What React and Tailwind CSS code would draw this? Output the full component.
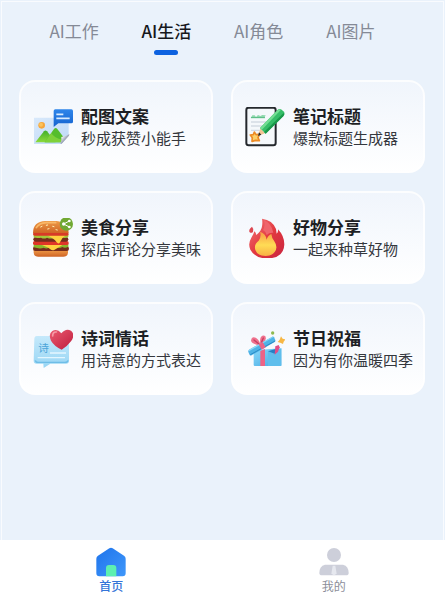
import React, { useState } from "react";

const PhotoIcon = () => (
  <svg viewBox="15 20 120 120" className="w-10 h-10 shrink-0" aria-hidden="true">
    <defs>
      <linearGradient id="sky" x1="0" y1="0" x2="1" y2="1">
        <stop offset="0" stopColor="#d9e9fb" />
        <stop offset="1" stopColor="#bdd9f8" />
      </linearGradient>
      <linearGradient id="hill" x1="0" y1="0" x2="0" y2="1">
        <stop offset="0" stopColor="#3fae2a" />
        <stop offset="1" stopColor="#8edb3c" />
      </linearGradient>
      <linearGradient id="bubble" x1="0" y1="0" x2="0" y2="1">
        <stop offset="0" stopColor="#2f86ea" />
        <stop offset="1" stopColor="#1462cf" />
      </linearGradient>
      <linearGradient id="fold" x1="0" y1="0" x2="1" y2="1">
        <stop offset="0.2" stopColor="#ffffff" />
        <stop offset="0.6" stopColor="#8a93aa" />
      </linearGradient>
    </defs>
    <path d="M18 52h104v52l-22 27H18z" fill="url(#sky)" />
    <circle cx="41" cy="75" r="10" fill="#f6a63a" />
    <circle cx="39" cy="73" r="6" fill="#fbc35d" />
    <path d="M22 126l26-33q4-5 9 0l26 33z" fill="url(#hill)" />
    <path d="M50 126l28-40q5-6 10 0l21 28-8 12z" fill="#55bd2d" />
    <path d="M50 126l20-28q8 16 34 20l-5 8z" fill="#7ed13a" />
    <path d="M97 130q5-10 3-20 13-1 24-9l-1 5-22 24z" fill="url(#fold)" />
    <path d="M82 27h48q5 0 5 5v32q0 5-5 5H91L77 80V32q0-5 5-5z" fill="url(#bubble)" />
    <path d="M85 42h21M85 54h40" stroke="#d9ecff" strokeWidth="5" />
  </svg>
);

const NoteIcon = () => (
  <svg viewBox="15 20 120 120" className="w-10 h-10 shrink-0" aria-hidden="true">
    <rect x="19" y="22" width="88" height="113" rx="7" fill="#f5f8fb" stroke="#25282d" strokeWidth="6" />
    <path d="M32 53l5-8h7l4 5 6-6 7 3 6-3 10 1-4 7z" fill="#8fd8ad" />
    <path d="M33 52h42" stroke="#55b981" strokeWidth="3" />
    <path d="M33 65h45M33 77h38M33 90h26" stroke="#d3dae4" strokeWidth="4" />
    <path d="M43 95l5 8 11-1-5 10 4 9-11-1-11 3 1-11-6-8 9-1z" fill="#fbd06a" stroke="#ed8b25" strokeWidth="5" strokeLinejoin="round" />
    <path d="M54 107l7-23 14 15z" fill="#f2c493" />
    <path d="M54 107l3-11 7 7z" fill="#25282d" />
    <path d="M60 83l50-52q6-7 13-4l9 7q4 7-2 13L77 100z" fill="#35bd68" />
    <path d="M60 83l53-54q5-4 10-1L65 89z" fill="#72dd92" />
    <path d="M72 95l59-57q4 4-1 10L77 100z" fill="#189849" />
  </svg>
);

const BurgerIcon = () => (
  <svg viewBox="15 23 120 120" className="w-10 h-10 shrink-0" aria-hidden="true">
    <defs>
      <linearGradient id="bun" x1="0" y1="0" x2="0" y2="1">
        <stop offset="0" stopColor="#ee9a47" />
        <stop offset="1" stopColor="#cf6425" />
      </linearGradient>
    </defs>
    <path d="M17 119h103v8q-1 12-14 12H31q-13 0-14-12z" fill="url(#bun)" />
    <rect x="15" y="108" width="108" height="14" rx="7" fill="#762d1c" />
    <path d="M17 101h104v8q-10 6-18 1-9 6-18 1-10 6-20 0-9 6-18 1-10 5-30-1z" fill="#8ab82c" />
    <path d="M30 101h78l-28 17q-7 4-13-1-7-8-37-16z" fill="#ffd13f" />
    <rect x="15" y="92" width="107" height="12" rx="5" fill="#df3628" />
    <rect x="16" y="80" width="105" height="14" rx="7" fill="#762d1c" />
    <path d="M17 72h104v8q-10 6-20 1-9 6-20 1-12 5-24 0-9 5-18 0-12 3-22-1z" fill="#a4c83a" />
    <path d="M56 75h57l-10 9-8 13q-4 5-9-1-8-12-30-21z" fill="#ffd13f" />
    <rect x="15" y="66" width="107" height="10" rx="5" fill="#d83a27" />
    <path d="M15 68q0-34 37-36h34q35 3 36 36z" fill="url(#bun)" />
    <path d="M25 52q9-14 30-15h28" fill="none" stroke="#f9b868" strokeWidth="5" strokeLinecap="round" />
    <path d="M38 50l4-2M55 45l4-1M74 48l4 1M59 56l4-1M84 58l4 1" stroke="#fff0b5" strokeWidth="3" strokeLinecap="round" />
    <circle cx="115" cy="41" r="20" fill="#70a832" />
    <path d="M124 32l-17 9 17 9" fill="none" stroke="#fff" strokeWidth="3" />
    <circle cx="124" cy="32" r="4" fill="#fff" />
    <circle cx="107" cy="41" r="5" fill="#fff" />
    <circle cx="124" cy="50" r="4" fill="#fff" />
  </svg>
);

const FireIcon = () => (
  <svg viewBox="15 23 120 120" className="w-10 h-10 shrink-0" aria-hidden="true">
    <defs>
      <linearGradient id="flame" x1="0" y1="0" x2="1" y2="1">
        <stop offset="0" stopColor="#f37a7c" />
        <stop offset="0.5" stopColor="#e2383f" />
        <stop offset="1" stopColor="#c92540" />
      </linearGradient>
      <linearGradient id="core" x1="0" y1="0" x2="0" y2="1">
        <stop offset="0" stopColor="#f79a45" />
        <stop offset="0.55" stopColor="#ffdc55" />
        <stop offset="1" stopColor="#f8b044" />
      </linearGradient>
    </defs>
    <path d="M66 25q32 4 42 31l2 14q5-5 4-13 19 20 19 45-1 38-44 42-42 3-58-26-8-18 3-36 7-10 9-19 5 4 6 11 16-13 17-26 2-12 0-23z" fill="url(#flame)" />
    <path d="M71 29q23 8 29 38-13-1-20 7-2-10-11-15 8-14 2-30z" fill="#ef656c" />
    <path d="M60 64q18 6 20 24 3-12 14-17 1 12 9 22 12 18 1 32-9 12-27 12-24 0-31-18-5-17 10-28 9-12 4-27z" fill="url(#core)" />
    <path d="M36 49q6 6 3 15-4 6-10 2-5-7 7-17z" fill="#dd4650" />
  </svg>
);

const PoemIcon = () => (
  <svg viewBox="15 20 120 120" className="w-10 h-10 shrink-0" aria-hidden="true">
    <defs>
      <linearGradient id="card" x1="0" y1="0" x2="0" y2="1">
        <stop offset="0" stopColor="#c5e9fb" />
        <stop offset="1" stopColor="#97d5f4" />
      </linearGradient>
      <linearGradient id="heart" x1="0" y1="0" x2="1" y2="1">
        <stop offset="0" stopColor="#ec5b70" />
        <stop offset="1" stopColor="#bd1c3d" />
      </linearGradient>
    </defs>
    <path d="M27 41h87q9 0 9 9v65q0 9-9 9H67l-20 13-1-13H26q-9 0-9-9l2-65q0-9 8-9z" fill="url(#card)" />
    <path d="M22 114q1 6 8 6h81q8 0 9-6" fill="none" stroke="#6ebde7" strokeWidth="4" />
    <path d="M66 92h48M29 106h82" stroke="#e3f6ff" strokeWidth="4" />
    <text x="31" y="88" fontSize="32" fill="#4ba4d8">诗</text>
    <path d="M100 33q14-17 29-8 14 12 0 32-11 15-28 25-23-11-32-27-9-20 4-29 15-8 27 7z" fill="url(#heart)" />
    <path d="M74 41q0-13 11-12" fill="none" stroke="#f69aa6" strokeWidth="5" strokeLinecap="round" />
  </svg>
);

const GiftIcon = () => (
  <svg viewBox="15 20 120 120" className="w-10 h-10 shrink-0" aria-hidden="true">
    <defs>
      <linearGradient id="box" x1="0" y1="0" x2="1" y2="1">
        <stop offset="0" stopColor="#8bd9fa" />
        <stop offset="1" stopColor="#43a8e2" />
      </linearGradient>
    </defs>
    <path d="M41 84l83-6v50q0 3-4 3H44q-3 0-3-4z" fill="url(#box)" />
    <path d="M84 87l20 7 20-16v53H84z" fill="#5fbeec" />
    <path d="M84 87l25-8-5 15z" fill="#267fc4" />
    <path d="M61 86l14-6v51H61z" fill="#ed6386" />
    <path d="M59 69q-23-4-26-14 2-14 14-9 9 4 14 19-3-21 6-25 13-2 10 11-4 12-15 18z" fill="#ef718d" />
    <path d="M42 53l14 11M70 47l-6 14" stroke="#c63d61" strokeWidth="4" strokeLinecap="round" />
    <path d="M27 82l70-39q3-1 5 2l4 8q1 4-2 6L35 99q-4 2-6-1l-4-9q-1-4 2-7z" fill="#4fb3e6" />
    <path d="M27 82l70-39q3-1 4 1L27 87z" fill="#8bd9f8" />
    <path d="M31 97l74-41" stroke="#2a8bc6" strokeWidth="3" />
    <path d="M56 66l12-7 9 16-12 7z" fill="#ed6386" />
    <path d="M106 72l10-4 3 7-5 13-10 9z" fill="#e14e86" />
    <path d="M123 42l5 7 9 2-6 7-2 7-8-4-8-2 6-7z" fill="#f7b744" />
    <circle cx="98" cy="32" r="5" fill="#8eb950" />
  </svg>
);

const HomeIcon = () => (
  <svg viewBox="0 0 90 90" className="w-[30px] h-[30px]" aria-hidden="true">
    <defs>
      <linearGradient id="house" x1="0" y1="0" x2="1" y2="1">
        <stop offset="0" stopColor="#1f74ec" />
        <stop offset="1" stopColor="#3f97fa" />
      </linearGradient>
    </defs>
    <path d="M40 4q5-4 10 0l34 22q5 3 5 9v44q0 9-9 9H10q-9 0-9-9V35q0-6 5-9z" fill="url(#house)" />
    <path d="M30 88V63q0-9 9-9h13q9 0 9 9v25z" fill="#5df0b0" />
  </svg>
);

const UserIcon = () => (
  <svg viewBox="0 0 90 90" className="w-[30px] h-[30px]" aria-hidden="true">
    <circle cx="45" cy="24" r="21" fill="#cdcfda" />
    <path d="M18 53h54q17 4 17 25 0 7-8 7H9q-8 0-8-7 0-21 17-25z" fill="#cdcfda" />
    <path d="M41 56h8l4 24-8 5-8-5z" fill="#e6e8ef" />
  </svg>
);

const tabs = ["AI工作", "AI生活", "AI角色", "AI图片"];

const cards = [
  { title: "配图文案", desc: "秒成获赞小能手", Icon: PhotoIcon },
  { title: "笔记标题", desc: "爆款标题生成器", Icon: NoteIcon },
  { title: "美食分享", desc: "探店评论分享美味", Icon: BurgerIcon },
  { title: "好物分享", desc: "一起来种草好物", Icon: FireIcon },
  { title: "诗词情话", desc: "用诗意的方式表达", Icon: PoemIcon },
  { title: "节日祝福", desc: "因为有你温暖四季", Icon: GiftIcon },
];

const App = () => {
  const [tab, setTab] = useState("AI生活");

  return (
    <div className="min-h-screen flex flex-col bg-[#eaf2fb] outline outline-white/70 -outline-offset-2 font-['Noto_Sans_CJK_SC',sans-serif]">
      <div className="flex pl-7 pr-12 pt-5">
        {tabs.map((name) => (
          <button
            key={name}
            onClick={() => setTab(name)}
            className="flex-1 flex flex-col items-center gap-2 cursor-pointer whitespace-nowrap"
          >
            <span
              className={
                tab === name
                  ? "text-[17px] leading-[22px] font-medium text-[#15171c]"
                  : "text-[17px] leading-[22px] text-[#858a96]"
              }
            >
              {name}
            </span>
            {tab === name && (
              <span className="w-6 h-[5px] rounded-full bg-[#0d62e0]" />
            )}
          </button>
        ))}
      </div>

      <main className="grid grid-cols-2 gap-[18px] pl-[19px] pr-5 pt-[25px] pb-6">
        {cards.map(({ title, desc, Icon }) => (
          <a
            key={title}
            href="#"
            className="flex items-center gap-2 py-[22px] pl-3 rounded-2xl border-2 border-white/80 bg-linear-to-b from-[#f0f5fc] to-white bg-origin-border whitespace-nowrap"
          >
            <Icon />
            <div>
              <h2 className="text-[17px] leading-[23px] font-bold text-[#1d1f24]">
                {title}
              </h2>
              <p className="text-[15px] leading-[22px] text-[#34373d]">{desc}</p>
            </div>
          </a>
        ))}
      </main>

      <nav className="mt-auto flex bg-white pt-[7px] pb-1.5">
        <a href="#" className="flex-1 flex flex-col items-center">
          <HomeIcon />
          <span className="text-xs leading-[17px] font-medium text-[#3474d8]">首页</span>
        </a>
        <a href="#" className="flex-1 flex flex-col items-center">
          <UserIcon />
          <span className="text-xs leading-[17px] text-[#8b8e99]">我的</span>
        </a>
      </nav>
    </div>
  );
};

export default App;
